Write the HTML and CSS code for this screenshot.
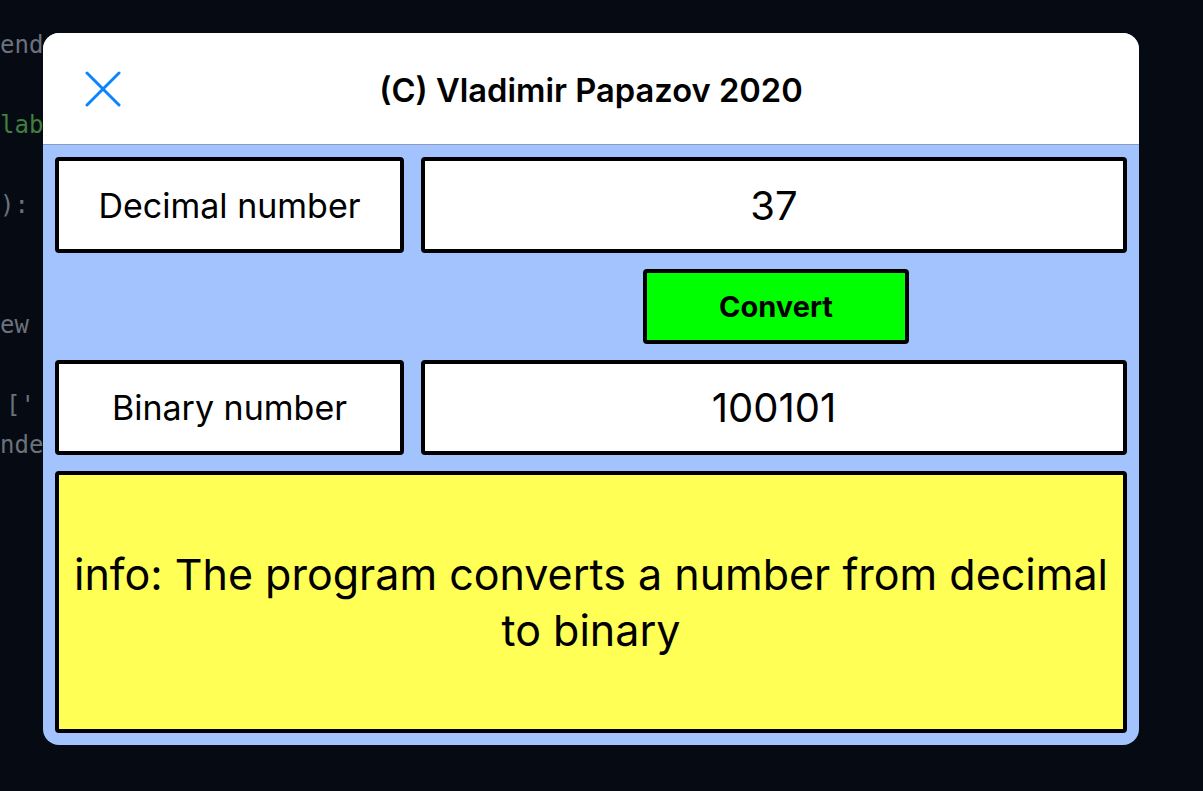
FILE: index.html
```html
<!DOCTYPE html>
<html>
<head>
<meta charset="utf-8">
<link rel="stylesheet" href="styles.css">
</head>
<body>
<pre class="code"><span>end  )</span>

<span class="green">lab</span>

<span>):</span>


<span>ew</span>

<span class="shift">['</span>
<span>nde</span></pre>
<div class="modal">
  <div class="header">
    <button class="close" aria-label="Close">
      <svg width="36" height="36" viewBox="0 0 36 36"><path d="M2 2L34 34M34 2L2 34" stroke="#0a84ff" stroke-width="3" stroke-linecap="round"/></svg>
    </button>
    <div class="title">(C) Vladimir Papazov 2020</div>
  </div>
  <div class="body">
    <div class="box label">Decimal number</div>
    <div class="box value">37</div>
    <div class="spacer"></div>
    <button class="convert">Convert</button>
    <div class="box label">Binary number</div>
    <div class="box value">100101</div>
    <div class="box info">info: The program converts a number from decimal to binary</div>
  </div>
</div>
</body>
</html>
```
FILE: styles.css
```css
html, body {
  margin: 0;
  padding: 0;
  height: 100%;
}
body {
  background: #060a12;
  overflow: hidden;
  position: relative;
  font-family: Inter, "Noto Sans", sans-serif;
}
.code {
  margin: 0;
  padding-top: 25px;
  font-family: "DejaVu Sans Mono", "Liberation Mono", monospace;
  font-size: 24px;
  line-height: 40px;
  color: #6b727c;
}
.code .green {
  color: #3f7f3f;
}
.code .shift {
  margin-left: 6px;
}
.modal {
  position: absolute;
  left: 43px;
  top: 33px;
  width: 1096px;
  height: 712px;
  border-radius: 16px;
  overflow: hidden;
  background: #a2c3fe;
  display: flex;
  flex-direction: column;
}
.header {
  height: 111px;
  background: #ffffff;
  border-bottom: 1px solid #8b9cc0;
  display: flex;
  align-items: center;
  position: relative;
}
.close {
  position: absolute;
  left: 42px;
  top: 38px;
  width: 36px;
  height: 36px;
  padding: 0;
  border: 0;
  background: none;
  display: block;
}
.close svg {
  display: block;
}
.title {
  flex: 1;
  text-align: center;
  font-weight: 600;
  font-size: 32.7px;
  color: #000;
  padding-top: 2px;
}
.body {
  flex: 1;
  padding: 12px;
  display: grid;
  grid-template-columns: 349px 1fr;
  grid-template-rows: 96px 75px 95px 1fr;
  column-gap: 17px;
  row-gap: 16px;
}
.box {
  box-sizing: border-box;
  border: 4px solid #000;
  border-radius: 4px;
  background: #fff;
  display: flex;
  align-items: center;
  justify-content: center;
  color: #000;
}
.label {
  font-size: 34px;
}
.value {
  font-size: 40px;
}
.convert {
  justify-self: center;
  width: 266px;
  height: 75px;
  box-sizing: border-box;
  border: 4px solid #000;
  border-radius: 4px;
  background: #00ff00;
  font-family: Inter, "Noto Sans", sans-serif;
  font-weight: 700;
  font-size: 29px;
  color: #000;
  padding: 0;
  margin-left: 4px;
}
.info {
  grid-column: 1 / 3;
  background: #ffff55;
  font-size: 43px;
  line-height: 56px;
  text-align: center;
  padding: 0;
}
```
